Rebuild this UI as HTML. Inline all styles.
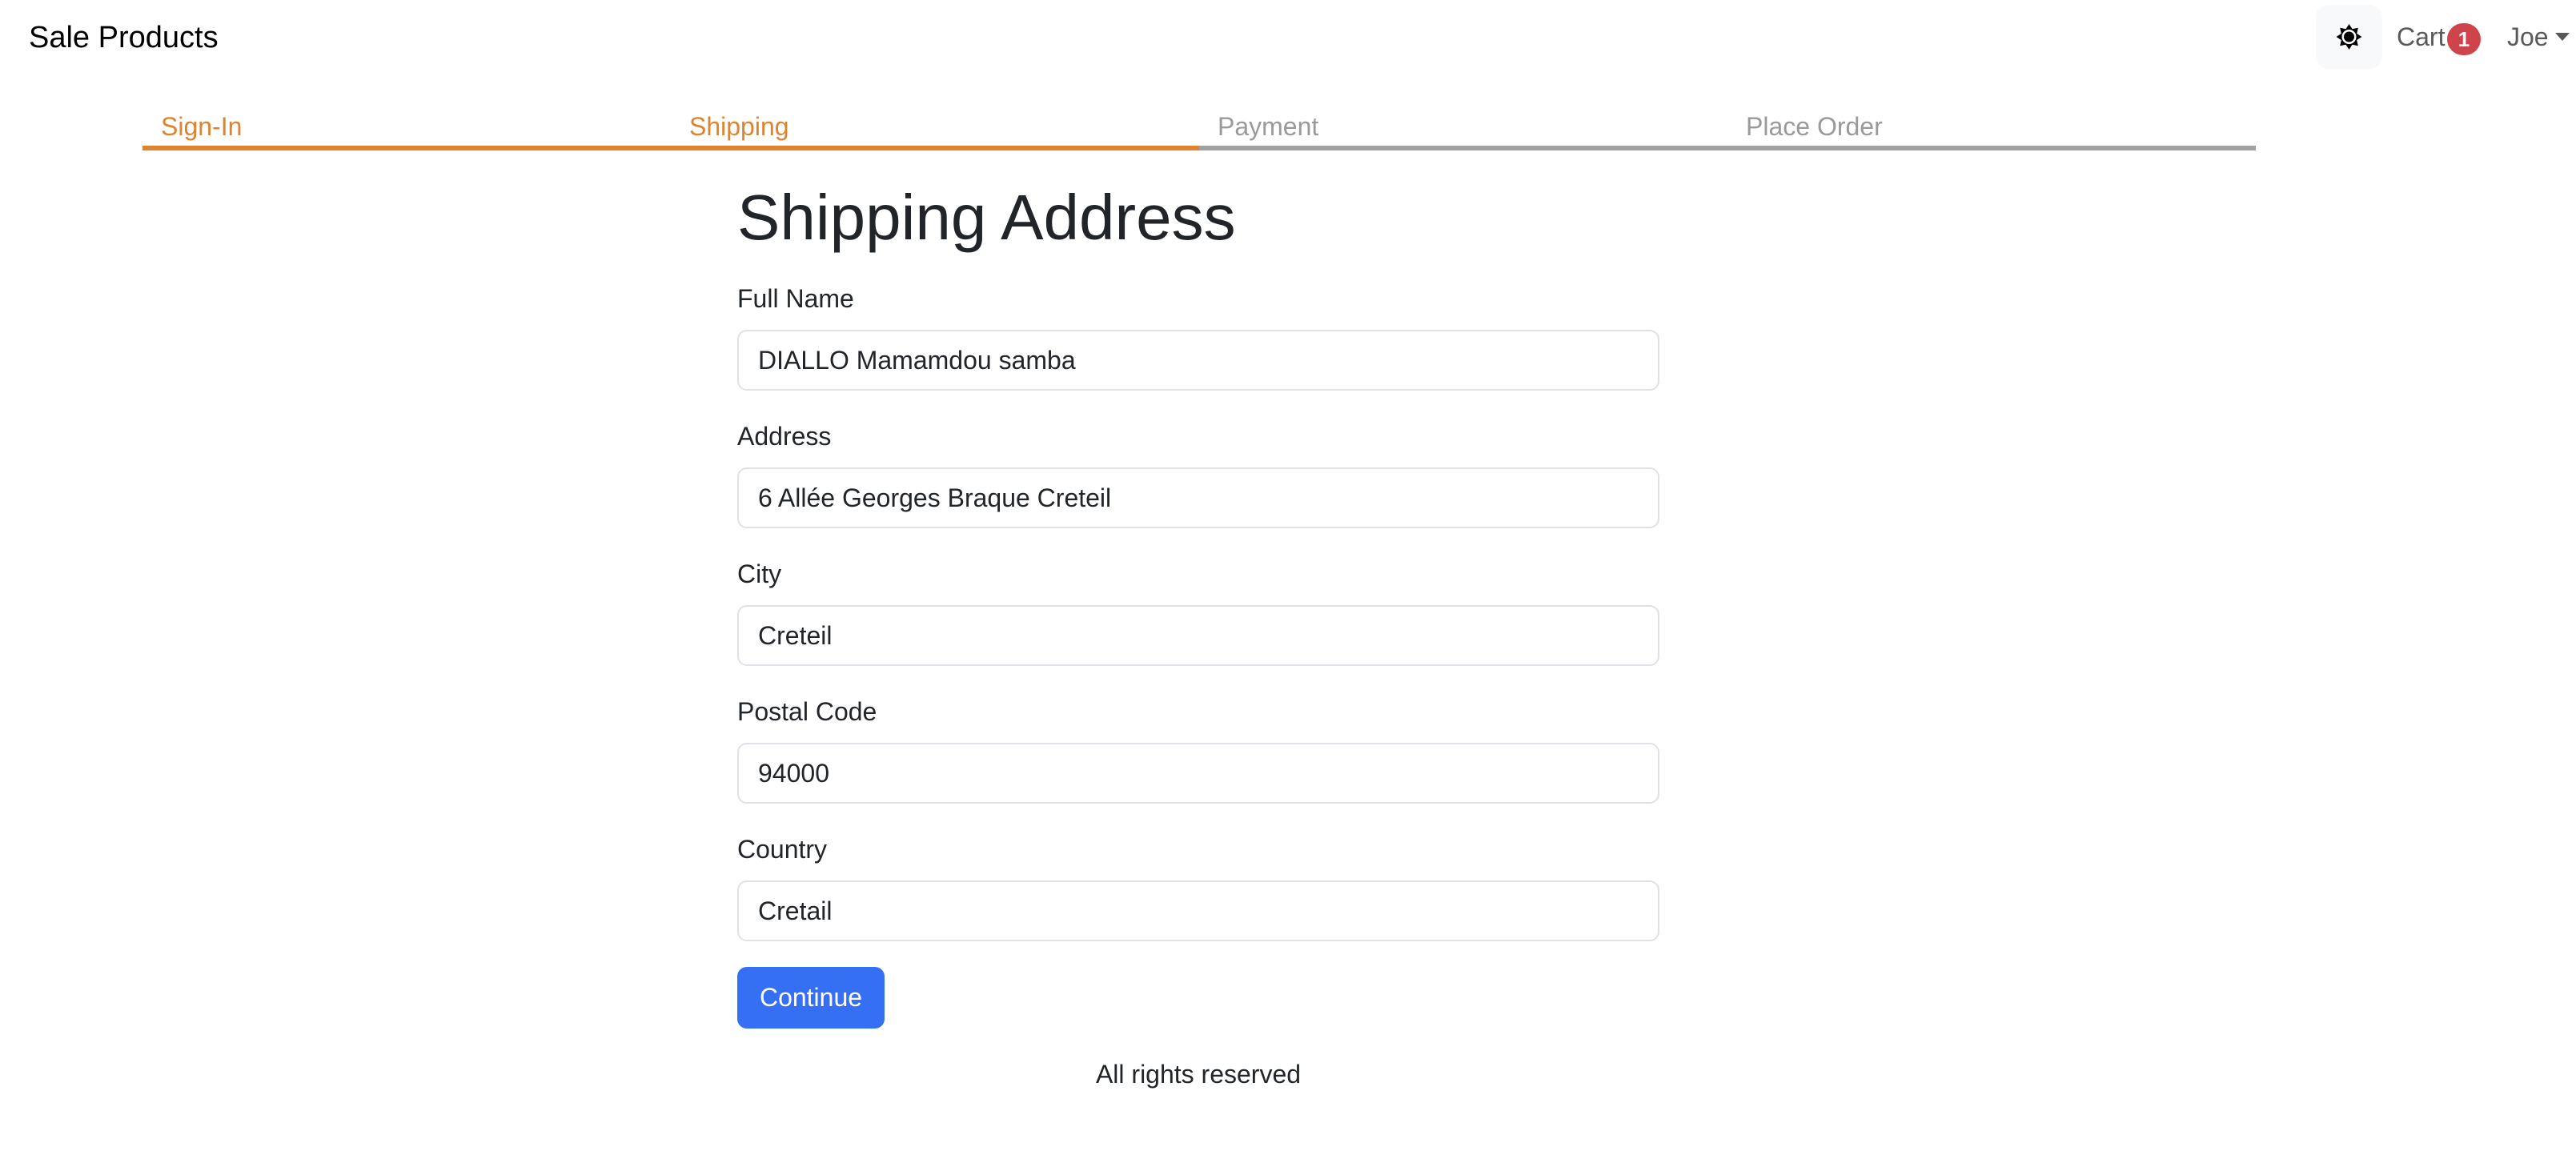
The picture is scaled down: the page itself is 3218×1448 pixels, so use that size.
<!DOCTYPE html>
<html><head><meta charset="utf-8">
<style>
*{box-sizing:border-box;margin:0;padding:0}
body{width:3218px;height:1448px;background:#fff;font-family:"Liberation Sans",sans-serif;color:#212529;position:relative;overflow:hidden}
.abs{position:absolute;white-space:nowrap}
.brand{left:36px;top:24px;font-size:38px;line-height:46px;color:#000}
.sunbox{left:2893px;top:6px;width:83px;height:80px;background:#f8f9fa;border-radius:16px}
.nav{font-size:32px;color:#595959;line-height:40px}
.badge{left:3057px;top:29px;width:42px;height:40px;border-radius:21px;background:#cf434a;color:#fff;font-size:26px;font-weight:bold;text-align:center;line-height:40px}
.caret{left:3192px;top:41px;width:0;height:0;border-left:9px solid transparent;border-right:9px solid transparent;border-top:10px solid #595959}
.step{top:138px;font-size:32px;line-height:40px}
.bar{top:182px;height:6px}
h1{position:absolute;left:921px;top:224px;font-size:80px;font-weight:500;line-height:96px;white-space:nowrap}
.lbl{position:absolute;left:921px;font-size:32px;line-height:40px}
.inp{position:absolute;left:921px;width:1152px;height:76px;border:2px solid #dee2e6;border-radius:12px;padding:0 24px;font-size:32px;line-height:72px}
.btn{position:absolute;left:921px;top:1208px;width:184px;height:77px;background:#356ff3;border-radius:12px;color:#fff;font-size:32px;line-height:77px;text-align:center}
</style></head><body>
<div class="abs brand">Sale Products</div>
<div class="abs sunbox"><svg width="83" height="80" viewBox="0 0 83 80"><g transform="translate(41.5,40)"><polygon fill="#000" points="0,-16 4,-9.7 11.3,-11.3 9.7,-4 16,0 9.7,4 11.3,11.3 4,9.7 0,16 -4,9.7 -11.3,11.3 -9.7,4 -16,0 -9.7,-4 -11.3,-11.3 -4,-9.7"/><circle r="9" fill="#fff"/><circle r="6.5" fill="#000"/></g></svg></div>
<div class="abs nav" style="left:2994px;top:26px">Cart</div>
<div class="abs badge">1</div>
<div class="abs nav" style="left:3132px;top:26px">Joe</div>
<div class="abs caret"></div>

<div class="abs step" style="left:201px;color:#e0832f">Sign-In</div>
<div class="abs step" style="left:861px;color:#e0832f">Shipping</div>
<div class="abs step" style="left:1521px;color:#9a9a9a">Payment</div>
<div class="abs step" style="left:2181px;color:#9a9a9a">Place Order</div>
<div class="abs bar" style="left:178px;width:1320px;background:#e0832f"></div>
<div class="abs bar" style="left:1498px;width:1320px;background:#a0a0a0"></div>

<h1>Shipping Address</h1>
<div class="lbl" style="top:353px">Full Name</div>
<div class="inp" style="top:412px">DIALLO Mamamdou samba</div>
<div class="lbl" style="top:525px">Address</div>
<div class="inp" style="top:584px">6 Allée Georges Braque Creteil</div>
<div class="lbl" style="top:697px">City</div>
<div class="inp" style="top:756px">Creteil</div>
<div class="lbl" style="top:869px">Postal Code</div>
<div class="inp" style="top:928px">94000</div>
<div class="lbl" style="top:1041px">Country</div>
<div class="inp" style="top:1100px">Cretail</div>
<div class="btn">Continue</div>
<div class="abs" style="left:0;width:2994px;text-align:center;top:1322px;font-size:32px;line-height:40px">All rights reserved</div>
</body></html>
